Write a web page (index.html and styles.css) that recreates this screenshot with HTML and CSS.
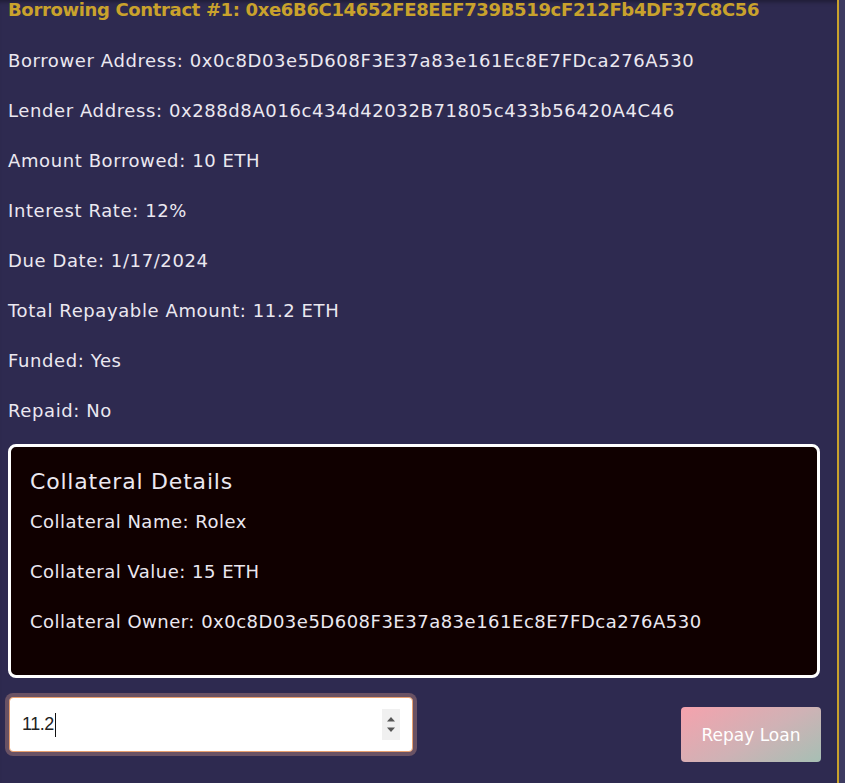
FILE: index.html
```html
<!DOCTYPE html>
<html>
<head>
<meta charset="utf-8">
<link rel="stylesheet" href="styles.css">
</head>
<body>
<div class="panel">
  <h3 class="title">Borrowing Contract #1: 0xe6B6C14652FE8EEF739B519cF212Fb4DF37C8C56</h3>
  <p class="row">Borrower Address: 0x0c8D03e5D608F3E37a83e161Ec8E7FDca276A530</p>
  <p class="row">Lender Address: 0x288d8A016c434d42032B71805c433b56420A4C46</p>
  <p class="row">Amount Borrowed: 10 ETH</p>
  <p class="row">Interest Rate: 12%</p>
  <p class="row">Due Date: 1/17/2024</p>
  <p class="row">Total Repayable Amount: 11.2 ETH</p>
  <p class="row">Funded: Yes</p>
  <p class="row">Repaid: No</p>
  <div class="collateral">
    <h4 class="coll-title">Collateral Details</h4>
    <p class="row">Collateral Name: Rolex</p>
    <p class="row">Collateral Value: 15 ETH</p>
    <p class="row">Collateral Owner: 0x0c8D03e5D608F3E37a83e161Ec8E7FDca276A530</p>
  </div>
  <div class="actions">
    <div class="field">
      <span class="value">11.2</span><span class="caret"></span>
      <span class="spin">
        <svg width="10" height="8" viewBox="0 0 10 8"><path d="M1 6.5 L5 2 L9 6.5 Z" fill="#555"/></svg>
        <svg width="10" height="8" viewBox="0 0 10 8"><path d="M1 1.5 L5 6 L9 1.5 Z" fill="#555"/></svg>
      </span>
    </div>
    <button class="repay">Repay Loan</button>
  </div>
</div>
</body>
</html>
```
FILE: styles.css
```css
html, body {
  margin: 0;
  padding: 0;
  background: #3d3b61;
  height: 100%;
}
.panel {
  width: 829px;
  height: 783px;
  padding: 0 0 0 8px;
  background: #2e2a50;
  border-right: 2px solid #c9a22c;
  box-shadow: inset 0 5px 4px -3px rgba(0,0,0,0.35);
  font-family: "Comic Sans MS", "DejaVu Sans", sans-serif;
  color: #ebe8f0;
  overflow: hidden;
  box-sizing: content-box;
}
.title {
  margin: 0 0 28px 0;
  font-size: 18px;
  line-height: 20px;
  font-weight: 700;
  color: #c9a22c;
  letter-spacing: -0.35px;
}
.row {
  margin: 0 0 24px 0;
  font-size: 18px;
  line-height: 26px;
  letter-spacing: 0.6px;
}
.collateral {
  margin-top: -4px;
  border: 3px solid #ffffff;
  border-radius: 8px;
  background: #100000;
  padding: 20px 0 16px 19px;
  box-sizing: content-box;
  width: 787px;
}
.collateral .row {
  letter-spacing: 0.5px;
}
.coll-title {
  margin: 0 0 12px 0;
  font-size: 22px;
  line-height: 30px;
  font-weight: 400;
  letter-spacing: 0.8px;
}
.actions {
  width: 813px;
  margin-top: 19px;
  display: flex;
  justify-content: space-between;
  align-items: flex-start;
}
.field {
  margin-left: 1px;
  width: 390px;
  height: 53px;
  padding: 0 0 0 12px;
  background: #fff;
  border: 1px solid #e9a06e;
  border-radius: 4px;
  box-shadow: 0 0 0 4px #6a5264;
  display: flex;
  align-items: center;
  font-family: "Liberation Sans", Arial, sans-serif;
  font-size: 18px;
  color: #222;
}
.value {
  letter-spacing: -0.5px;
}
.caret {
  width: 1px;
  height: 24px;
  background: #111;
  margin-left: 1px;
}
.spin {
  margin-left: auto;
  margin-right: 12px;
  width: 18px;
  height: 31px;
  background: #f0f0f0;
  display: flex;
  flex-direction: column;
  align-items: center;
  justify-content: center;
  gap: 3px;
}
.repay {
  margin-top: 10px;
  width: 140px;
  height: 55px;
  border: none;
  border-radius: 4px;
  background: linear-gradient(150deg, #f5a2ad 0%, #cfb2b5 55%, #a6bfb4 100%);
  color: #fff;
  font-family: "Comic Sans MS", "DejaVu Sans", sans-serif;
  font-size: 17px;
  padding: 0;
}
```
